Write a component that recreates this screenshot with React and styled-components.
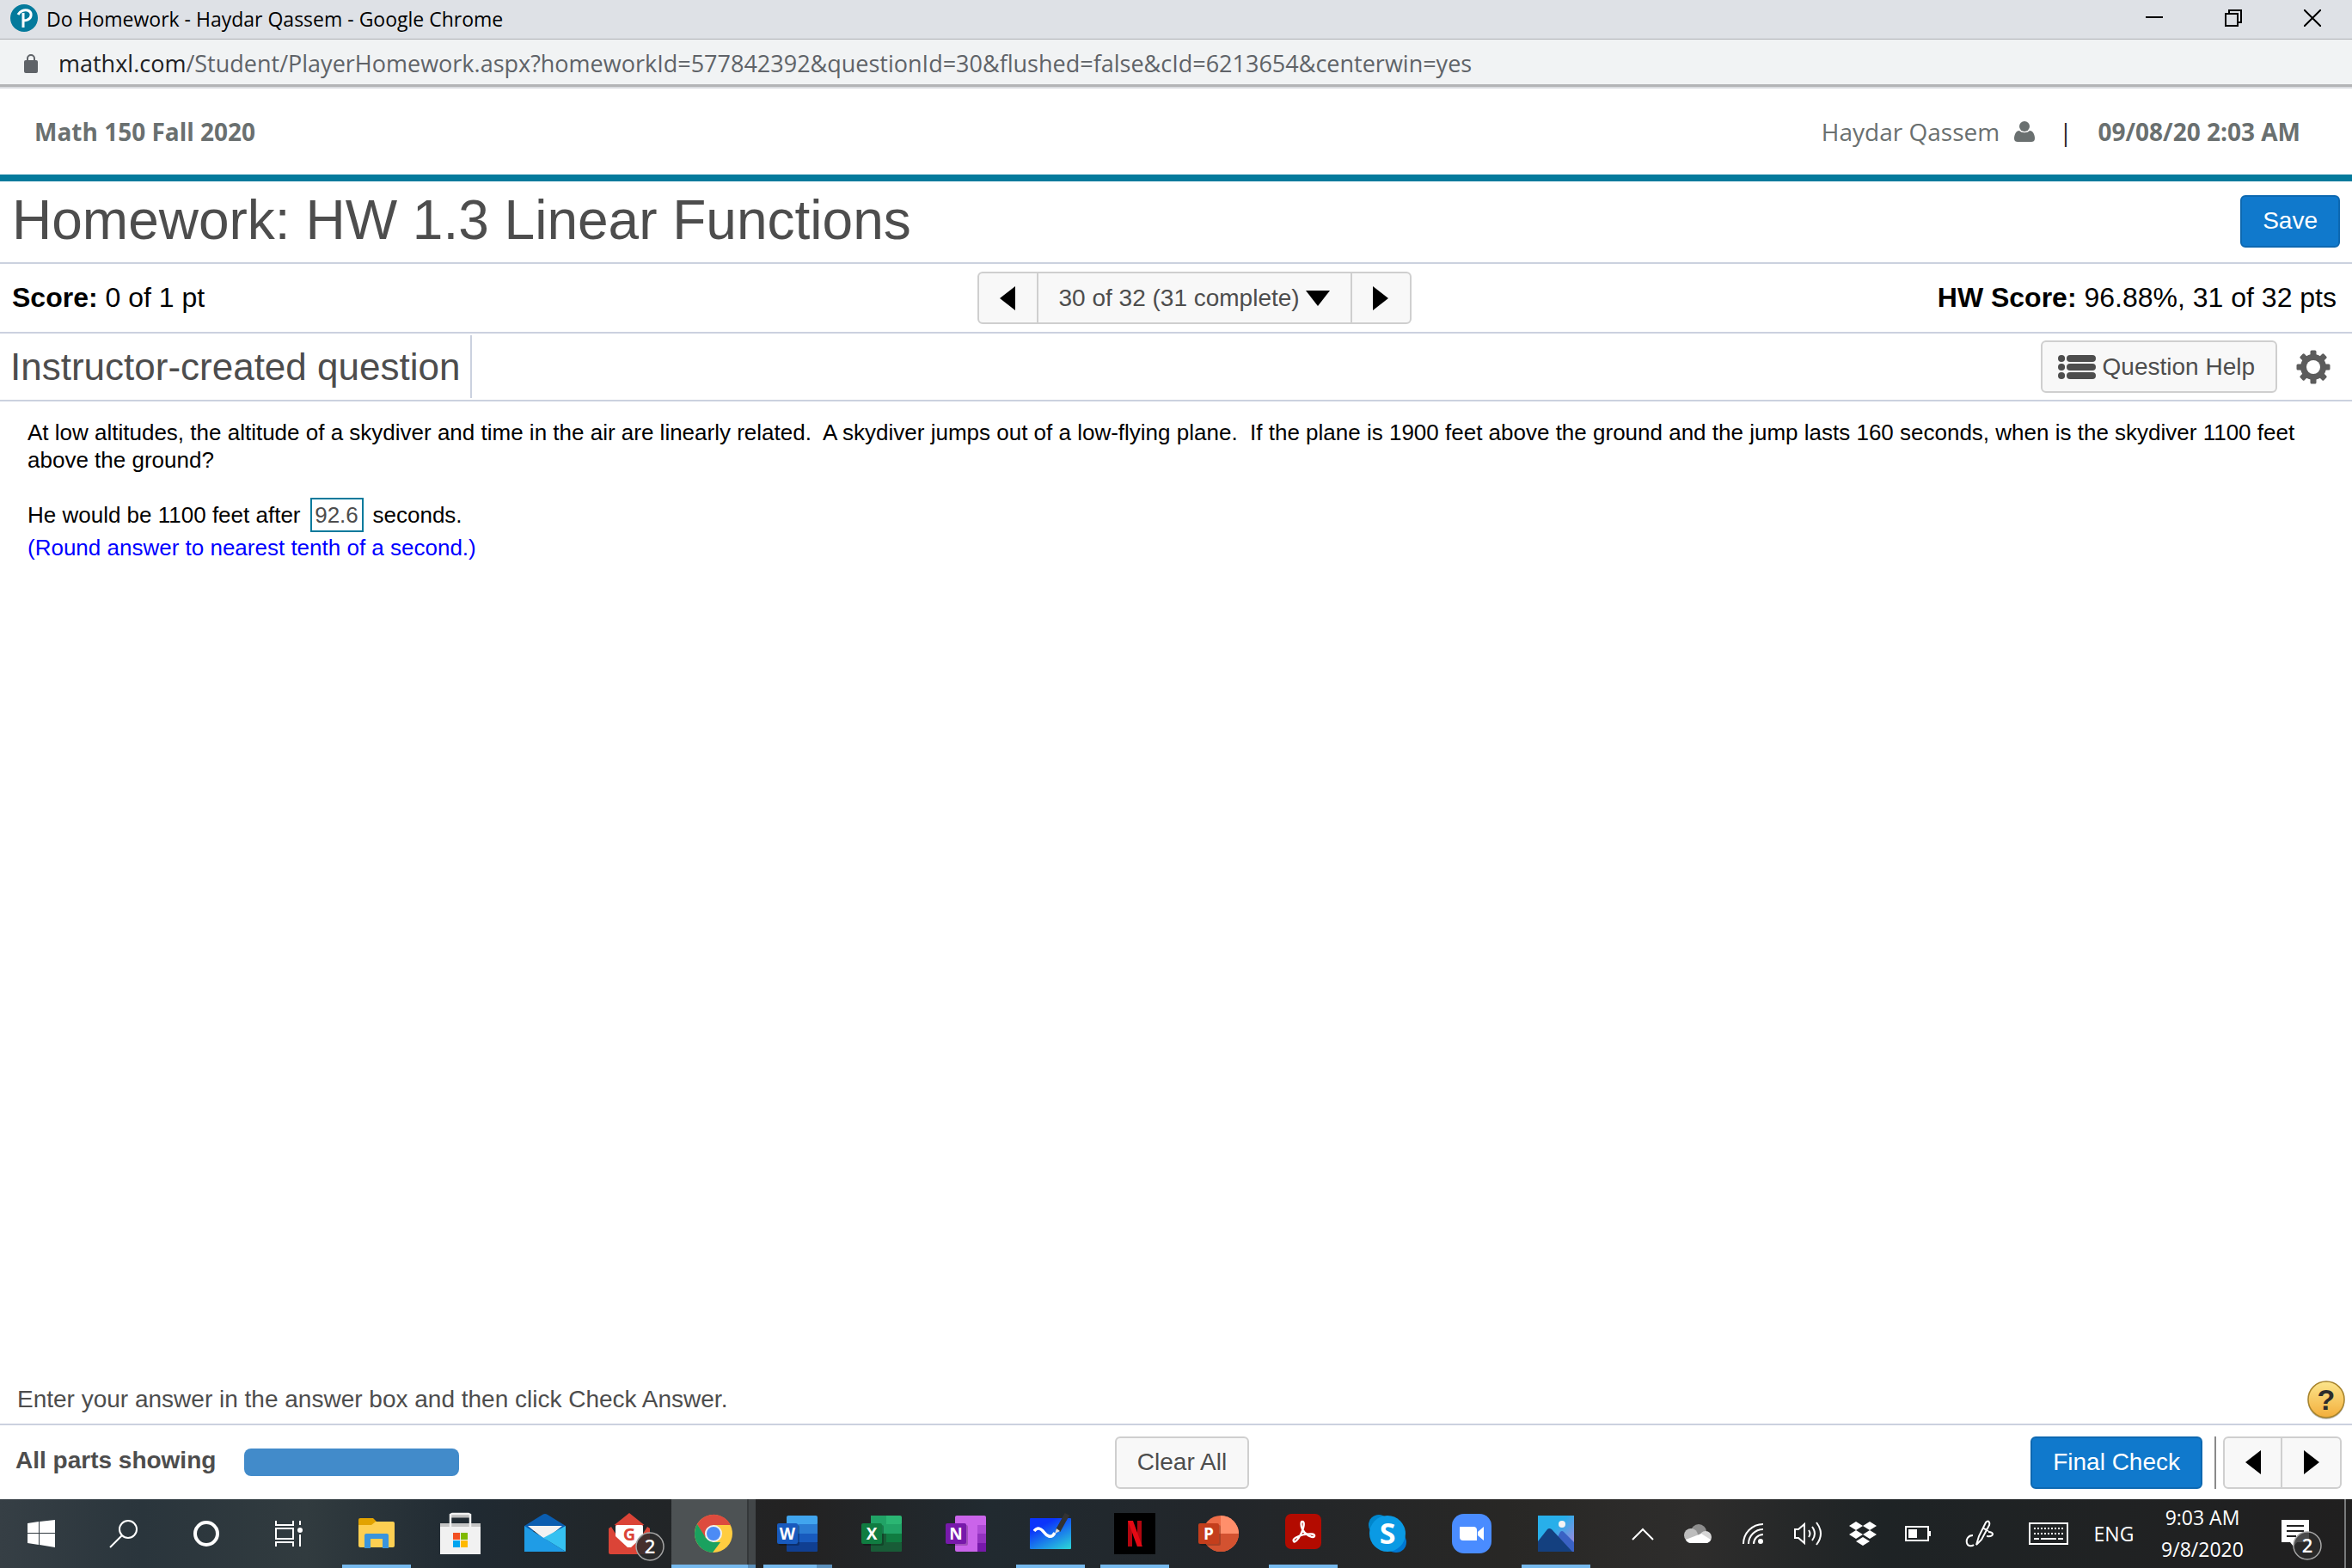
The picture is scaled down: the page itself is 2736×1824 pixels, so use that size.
import React from 'react'
import styled, { createGlobalStyle, css } from 'styled-components'

const OFFICE = {
  word: { letter: 'W', tile: '#185abd', rows: ['#41a5ee', '#2b7cd3', '#185abd', '#103f91'] },
  excel: { letter: 'X', tile: '#107c41', rows: ['#2bb673', '#21a366', '#107c41', '#185c37'] },
}

function ArrowLeft() {
  return (
    <svg width="18" height="28" viewBox="0 0 18 28" aria-hidden="true">
      <path d="M18 0v28L0 14z" fill="#000" />
    </svg>
  )
}

function ArrowRight() {
  return (
    <svg width="18" height="28" viewBox="0 0 18 28" aria-hidden="true">
      <path d="M0 0v28l18-14z" fill="#000" />
    </svg>
  )
}

function PearsonIcon() {
  return (
    <svg width="32" height="32" viewBox="0 0 32 32" aria-hidden="true">
      <circle cx="16" cy="16" r="16" fill="#047a9c" />
      <path d="M9 12c2-4 7-6 11-5 6 2 5 9 0 11-2 1-4 1-5 0M15 10v17" fill="none" stroke="#fff" strokeWidth="3" />
    </svg>
  )
}

function LockIcon() {
  return (
    <svg width="16" height="22" viewBox="0 0 16 22" aria-hidden="true">
      <rect y="7" width="16" height="15" rx="2" fill="#5f6368" />
      <path d="M4 8V5a4 4 0 0 1 8 0v3" fill="none" stroke="#5f6368" strokeWidth="2" />
    </svg>
  )
}

function PersonIcon() {
  return (
    <svg width="24" height="24" viewBox="0 0 24 24" aria-hidden="true">
      <circle cx="12" cy="6" r="6" fill="#6a7070" />
      <path d="M6 11c3 3 9 3 12 0 4 0 6 5 6 9 0 3-2 4-4 4H4c-2 0-4-1-4-4 0-4 2-9 6-9z" fill="#6a7070" />
    </svg>
  )
}

function ListIcon() {
  return (
    <svg width="44" height="30" viewBox="0 0 44 30" aria-hidden="true">
      {[5, 15, 25].map((y) => (
        <g key={y} stroke="#4d4d4d" strokeWidth="8" strokeLinecap="round">
          <path d={`M4 ${y}h0.1M14 ${y}h26`} />
        </g>
      ))}
    </svg>
  )
}

function GearIcon() {
  return (
    <svg width="40" height="40" viewBox="-20 -20 40 40" aria-hidden="true">
      {[0, 45, 90, 135].map((a) => (
        <rect key={a} x="-3.5" y="-19.5" width="7" height="39" rx="1.5" fill="#5c5c5c" transform={`rotate(${a})`} />
      ))}
      <circle r="15" fill="#5c5c5c" />
      <circle r="8" fill="#fff" />
    </svg>
  )
}

function HelpIcon() {
  return (
    <svg width="44" height="46" viewBox="0 0 44 46" aria-hidden="true">
      <defs>
        <linearGradient id="help" x1="0" y1="0" x2="0" y2="1">
          <stop offset="0" stopColor="#fce58c" />
          <stop offset="1" stopColor="#f3ae3c" />
        </linearGradient>
      </defs>
      <circle cx="22" cy="23.5" r="21.5" fill="#bbb" />
      <circle cx="22" cy="22" r="21" fill="url(#help)" stroke="#a8842c" strokeWidth="1.5" />
      <text x="22" y="34" textAnchor="middle" fontFamily="Liberation Sans, sans-serif" fontWeight="700" fontSize="34" fill="#2c2c2c">?</text>
    </svg>
  )
}

function AppIcon({ children }) {
  return (
    <svg width="48" height="48" viewBox="0 0 48 48" overflow="visible" aria-hidden="true">
      {children}
    </svg>
  )
}

function IconLetter({ x = 12, y = 31, size = 19, color = '#fff', children }) {
  return (
    <text x={x} y={y} textAnchor="middle" fontFamily="Open Sans, sans-serif" fontWeight="700" fontSize={size} fill={color}>
      {children}
    </text>
  )
}

function CountBadge({ x, y }) {
  return (
    <g>
      <circle cx={x} cy={y} r="16" fill="#2b2b2b" fillOpacity="0.85" stroke="#a5a5a5" strokeWidth="1.5" />
      <text x={x} y={y + 8} textAnchor="middle" fontFamily="Open Sans, sans-serif" fontWeight="600" fontSize="22" fill="#fff">2</text>
    </g>
  )
}

function ExplorerIcon() {
  return (
    <AppIcon>
      <path d="M3 8a2 2 0 0 1 2-2h15l4 4v8H3z" fill="#e2a300" />
      <path d="M3 14h15l5-4h20a2 2 0 0 1 2 2v26a2 2 0 0 1-2 2H5a2 2 0 0 1-2-2z" fill="#fdcf52" />
      <path d="M10 41V26a2 2 0 0 1 2-2h24a2 2 0 0 1 2 2v15h-7V30H17v11z" fill="#3a94dc" />
    </AppIcon>
  )
}

function StoreIcon() {
  return (
    <AppIcon>
      <path d="M0 12h47v5H0z" fill="#c4c4c4" />
      <path d="M13 3h21" stroke="#bdbdbd" strokeWidth="5" />
      <path d="M0 16h47v32H0z" fill="#f1f1f1" />
      <path d="M12 16V2l2-1h19l2 1v14" fill="none" stroke="#f1f1f1" strokeWidth="2.5" />
      <path d="M15 23h8v8h-8z" fill="#f25022" />
      <path d="M24 23h8v8h-8z" fill="#7fba00" />
      <path d="M15 32h8v8h-8z" fill="#00a4ef" />
      <path d="M24 32h8v8h-8z" fill="#ffb900" />
    </AppIcon>
  )
}

function MailIcon() {
  return (
    <AppIcon>
      <path d="M0 15L21 2q3-2 6 0l21 13-4 6H4z" fill="#0a5db0" />
      <path d="M4 15h40L24 31z" fill="#f2f2f2" />
      <path d="M48 15v30L22 29z" fill="#35c1f1" />
      <path d="M0 15l48 30H0z" fill="#1f9ce6" />
    </AppIcon>
  )
}

function GmailIcon() {
  return (
    <AppIcon>
      <path d="M24 0l20 16H4z" fill="#db4437" />
      <path d="M0 18l3-2h42l3 2v28a2 2 0 0 1-2 2H2a2 2 0 0 1-2-2z" fill="#db4437" />
      <path d="M3 16l5 8V14h-3zM45 16l-5 8V14h3z" fill="#212629" />
      <path d="M8 16a2 2 0 0 1 2-2h28a2 2 0 0 1 2 2v11L26 40h-4L8 27z" fill="#fff" />
      <IconLetter x={24} y={32} size={20} color="#db4437">G</IconLetter>
      <CountBadge x={48} y={39} />
    </AppIcon>
  )
}

function ChromeIcon() {
  return (
    <AppIcon>
      <circle cx="24" cy="24" r="22" fill="#ffcd40" />
      <path d="M5 13l9 16 10-15h20A22 22 0 0 0 5 13z" fill="#dd4b3e" />
      <path d="M5 13l10 16 9 5h8l-9 12A22 22 0 0 1 5 13z" fill="#1aa15f" />
      <circle cx="24" cy="24" r="10" fill="#f1f1f1" />
      <circle cx="24" cy="24" r="8" fill="#4c8bf5" />
    </AppIcon>
  )
}

function OfficeIcon({ kind }) {
  const { letter, tile, rows } = OFFICE[kind]
  return (
    <AppIcon>
      <rect x="11" y="3" width="36" height="11" rx="2" fill={rows[0]} />
      <rect x="11" y="13" width="36" height="11" fill={rows[1]} />
      <rect x="11" y="24" width="36" height="10" fill={rows[2]} />
      <rect x="11" y="34" width="36" height="11" rx="1" fill={rows[3]} />
      {kind === 'excel' && <path d="M11 3h18v21H11z" fill="#21a366" />}
      {kind === 'excel' && <path d="M11 24h18v10H11z" fill="#185c37" />}
      <rect x="2" y="14" width="24" height="24" rx="2" fill="#000" fillOpacity="0.25" />
      <rect y="12" width="24" height="24" rx="2" fill={tile} />
      <IconLetter>{letter}</IconLetter>
    </AppIcon>
  )
}

function OneNoteIcon() {
  return (
    <AppIcon>
      <rect x="11" y="3" width="36" height="42" rx="2" fill="#ca64ea" />
      <path d="M37 14h10v10H37z" fill="#ae4bd5" />
      <path d="M37 24h10v11H37z" fill="#9332bf" />
      <path d="M37 35h10v10H37z" fill="#7719aa" />
      <rect x="2" y="14" width="24" height="24" rx="2" fill="#000" fillOpacity="0.2" />
      <rect y="12" width="24" height="24" rx="2" fill="#7719aa" />
      <IconLetter>N</IconLetter>
    </AppIcon>
  )
}

function WhiteboardIcon() {
  return (
    <AppIcon>
      <defs>
        <linearGradient id="board" x1="0.2" y1="0" x2="0.9" y2="1">
          <stop offset="0.2" stopColor="#0b34fb" />
          <stop offset="1" stopColor="#2bd0d8" />
        </linearGradient>
      </defs>
      <rect y="6" width="48" height="36" rx="1" fill="url(#board)" />
      <path d="M5 21c4-5 8-3 11 1s9 9 13 1" fill="none" stroke="#fff" strokeWidth="3.5" />
      <path d="M31 19L41 1l4 2-10 18z" fill="#333" stroke="#333" strokeWidth="1.5" />
      <path d="M31 18l4 3-6 3z" fill="#ddd" />
    </AppIcon>
  )
}

function NetflixIcon() {
  return (
    <AppIcon>
      <rect width="48" height="48" fill="#000" />
      <rect x="16" y="9" width="5" height="30" fill="#b1060f" />
      <rect x="27" y="9" width="5" height="30" fill="#b1060f" />
      <rect x="16" y="9" width="6" height="30" fill="#e50914" transform="translate(-3.3 0) skewX(20)" />
    </AppIcon>
  )
}

function PowerPointIcon() {
  return (
    <AppIcon>
      <circle cx="26" cy="24" r="21" fill="#ed6c47" />
      <path d="M26 24V3a21 21 0 0 1 21 21z" fill="#ff8f6b" />
      <path d="M5 24h42a21 21 0 0 1-42 0z" fill="#d35230" />
      <rect x="2" y="14" width="24" height="24" rx="2" fill="#000" fillOpacity="0.2" />
      <rect y="12" width="24" height="24" rx="2" fill="#c43e1c" />
      <IconLetter>P</IconLetter>
    </AppIcon>
  )
}

function AcrobatIcon() {
  return (
    <AppIcon>
      <rect x="3" y="1" width="42" height="41" rx="7" fill="#b30b00" />
      <path
        d="M13 33c-2-3 4-6 12-8 7-1 13-1 12 2-2 3-11-2-14-8-2-4-2-9 0-9 3 0 2 7-2 15-3 6-7 10-8 8z"
        fill="none"
        stroke="#fff"
        strokeWidth="2.3"
      />
    </AppIcon>
  )
}

function SkypeIcon() {
  return (
    <AppIcon>
      <circle cx="14" cy="14" r="12" fill="#0086cc" />
      <circle cx="34" cy="34" r="12" fill="#0078d4" />
      <circle cx="24" cy="24" r="21" fill="#0a9ae4" />
      <IconLetter x={24} y={36} size={34}>S</IconLetter>
    </AppIcon>
  )
}

function ZoomIcon() {
  return (
    <AppIcon>
      <rect x="1" y="1" width="46" height="46" rx="14" fill="#4a8cff" />
      <path d="M10 16h16a4 4 0 0 1 4 4v12H14a4 4 0 0 1-4-4zM31 22l7-6v16l-7-6z" fill="#fff" />
    </AppIcon>
  )
}

function PhotosIcon() {
  return (
    <AppIcon>
      <defs>
        <linearGradient id="sky" x1="0" y1="0" x2="1" y2="1">
          <stop offset="0.4" stopColor="#28afea" />
          <stop offset="0.8" stopColor="#8a8ee0" />
        </linearGradient>
      </defs>
      <rect x="3" y="3" width="42" height="42" fill="url(#sky)" />
      <path d="M20 40l9-18q2-2 4 0l12 12v11H20z" fill="#3a62c4" />
      <path d="M3 33l11-14q2-2 5 0l24 26H3z" fill="#14407f" />
      <circle cx="31" cy="13" r="4" fill="#f4f4f4" />
    </AppIcon>
  )
}

function Line({ w = 32, h = 32, sw = 2, children }) {
  return (
    <svg width={w} height={h} viewBox={`0 0 ${w} ${h}`} fill="none" stroke="#fff" strokeWidth={sw} overflow="visible" aria-hidden="true">
      {children}
    </svg>
  )
}

const apps = [
  { name: 'File Explorer', icon: <ExplorerIcon />, open: true },
  { name: 'Microsoft Store', icon: <StoreIcon /> },
  { name: 'Mail', icon: <MailIcon /> },
  { name: 'Gmail', icon: <GmailIcon /> },
  { name: 'Google Chrome', icon: <ChromeIcon />, open: true, active: true },
  { name: 'Word', icon: <OfficeIcon kind="word" />, open: true, stacked: true },
  { name: 'Excel', icon: <OfficeIcon kind="excel" /> },
  { name: 'OneNote', icon: <OneNoteIcon /> },
  { name: 'Whiteboard', icon: <WhiteboardIcon />, open: true },
  { name: 'Netflix', icon: <NetflixIcon />, open: true },
  { name: 'PowerPoint', icon: <PowerPointIcon /> },
  { name: 'Acrobat Reader', icon: <AcrobatIcon />, open: true },
  { name: 'Skype', icon: <SkypeIcon /> },
  { name: 'Zoom', icon: <ZoomIcon /> },
  { name: 'Photos', icon: <PhotosIcon />, open: true },
]

function ChromeWindow() {
  return (
    <header>
      <TitleBar>
        <PearsonIcon />
        <WindowTitle>Do Homework - Haydar Qassem - Google Chrome</WindowTitle>
        <WindowButton aria-label="Minimize">
          <svg width="20" height="20" viewBox="0 0 20 20"><path d="M0 9h20" stroke="#000" strokeWidth="2" /></svg>
        </WindowButton>
        <WindowButton aria-label="Restore">
          <svg width="20" height="20" viewBox="0 0 20 20" fill="none" stroke="#000" strokeWidth="2">
            <path d="M1 5h14v14H1zM5 5V1h14v14h-4" />
          </svg>
        </WindowButton>
        <WindowButton aria-label="Close">
          <svg width="20" height="20" viewBox="0 0 20 20"><path d="M0 0l20 20M20 0L0 20" stroke="#000" strokeWidth="2" /></svg>
        </WindowButton>
      </TitleBar>
      <AddressBar>
        <LockIcon />
        <Address>
          <Domain>mathxl.com</Domain>/Student/PlayerHomework.aspx?homeworkId=577842392&amp;questionId=30&amp;flushed=false&amp;cId=6213654&amp;centerwin=yes
        </Address>
      </AddressBar>
    </header>
  )
}

function Taskbar() {
  return (
    <TaskbarRow>
      <SystemButton aria-label="Start">
        <svg width="32" height="32" viewBox="0 0 32 32"><path d="M0 4l13-2v13H0zM14 2l18-2v15H14zM0 16h13v13L0 27zM14 16h18v16l-18-3z" fill="#fff" /></svg>
      </SystemButton>
      <SystemButton aria-label="Search">
        <Line><circle cx="21" cy="11" r="10" /><path d="M14 18L0 32" /></Line>
      </SystemButton>
      <SystemButton aria-label="Cortana">
        <Line sw={4}><circle cx="16" cy="16" r="13" /></Line>
      </SystemButton>
      <SystemButton aria-label="Task View">
        <Line>
          <path d="M1 1v5h20V1M1 31v-5h20v5M1 10h20v12H1zM29 1v5M29 17v14" />
          <circle cx="29" cy="12" r="2" fill="#fff" />
        </Line>
      </SystemButton>
      <AppList>
        {apps.map((app) => (
          <AppButton key={app.name} aria-label={app.name} $active={app.active}>
            {app.icon}
            {app.open && <OpenMark $wide={app.active} $split={app.active || app.stacked} />}
          </AppButton>
        ))}
      </AppList>
      <Tray>
        <TrayButton aria-label="Show hidden icons">
          <Line w={26} h={14}><path d="M1 14L13 2l12 12" /></Line>
        </TrayButton>
        <TrayButton aria-label="OneDrive">
          <svg width="32" height="22" viewBox="0 0 32 22">
            <circle cx="17" cy="9" r="9" fill="#8d8d8d" />
            <circle cx="8" cy="13" r="8" fill="#bdbdbd" />
            <circle cx="25" cy="15" r="7" fill="#d6d6d6" />
            <path d="M2 18l18-7 11 7q-1 3-5 4H7q-4-1-5-4z" fill="#fff" />
          </svg>
        </TrayButton>
        <TrayButton aria-label="Network">
          <Line w={24} h={24}>
            <path d="M1 24A23 23 0 0 1 24 1M7 24A17 17 0 0 1 24 7M13 24A11 11 0 0 1 24 13" />
            <circle cx="21" cy="21" r="2" fill="#fff" />
          </Line>
        </TrayButton>
        <TrayButton aria-label="Volume">
          <Line w={32} h={28}>
            <path d="M1 9h4l7-6v22l-7-6H1zM17 10q3 4 0 8M21 6q6 8 0 16M26 1q10 13 0 26" />
          </Line>
        </TrayButton>
        <TrayButton aria-label="Dropbox">
          <svg width="32" height="28" viewBox="0 0 32 28">
            <path d="M8 0l8 5-8 5-8-5zM24 0l8 5-8 5-8-5zM8 10l8 5-8 5-8-5zM24 10l8 5-8 5-8-5zM16 18l8 5-8 5-8-5z" fill="#fff" />
          </svg>
        </TrayButton>
        <TrayButton aria-label="Battery">
          <Line w={30} h={18}>
            <path d="M1 1h26v16H1zM29 6v6" />
            <path d="M4 4h10v10H4z" fill="#fff" stroke="none" />
          </Line>
        </TrayButton>
        <TrayButton aria-label="Windows Ink" $wide>
          <Line>
            <path d="M12 29l3-10 8-16q3-3 4 0 1 2-1 5l-8 15zM19 9l7 4M8 18c-6 0-8 5-7 9s6 4 8 2M26 14c7 0 7 6-2 5" />
          </Line>
        </TrayButton>
        <TrayButton aria-label="Touch keyboard" $wide>
          <Line w={46} h={26}>
            <path d="M1 1h44v24H1z" />
            <path d="M6 7h34M6 13h34" strokeDasharray="2 2" />
            <path d="M6 19h6M14 19h18M34 19h6" />
          </Line>
        </TrayButton>
        <Language>ENG</Language>
        <Clock>
          <span>9:03 AM</span>
          <span>9/8/2020</span>
        </Clock>
        <Notifications aria-label="Notifications">
          <svg width="32" height="32" viewBox="0 0 32 32" overflow="visible">
            <path d="M0 0h32v26H18l-4 5-4-5H0z" fill="#fff" />
            <path d="M6 7h20M6 13h20M6 19h11" stroke="#222" strokeWidth="2" />
            <CountBadge x={30} y={30} />
          </svg>
        </Notifications>
        <ShowDesktop aria-label="Show desktop" />
      </Tray>
    </TaskbarRow>
  )
}

function App() {
  return (
    <Page>
      <GlobalStyle />
      <ChromeWindow />
      <CourseBar>
        <strong>Math 150 Fall 2020</strong>
        <UserInfo>
          <UserName>
            Haydar Qassem
            <PersonIcon />
          </UserName>
          <Pipe>|</Pipe>
          <strong>09/08/20 2:03 AM</strong>
        </UserInfo>
      </CourseBar>
      <TitleRow>
        <PageTitle>Homework: HW 1.3 Linear Functions</PageTitle>
        <PrimaryButton>Save</PrimaryButton>
      </TitleRow>
      <ScoreRow>
        <Score><b>Score:</b> 0 of 1 pt</Score>
        <QuestionNav>
          <ArrowButton aria-label="Previous question"><ArrowLeft /></ArrowButton>
          <QuestionPicker>
            <PickerSelect aria-label="Question" defaultValue="30">
              <option value="30">30 of 32 (31 complete)</option>
            </PickerSelect>
            <svg width="28" height="18" viewBox="0 0 28 18" aria-hidden="true"><path d="M0 0h28L14 18z" /></svg>
          </QuestionPicker>
          <ArrowButton aria-label="Next question"><ArrowRight /></ArrowButton>
        </QuestionNav>
        <Score $right><b>HW Score:</b> 96.88%, 31 of 32 pts</Score>
      </ScoreRow>
      <QuestionHeader>
        <QuestionTitle>Instructor-created question</QuestionTitle>
        <HelpButton>
          <ListIcon />
          Question Help
        </HelpButton>
        <IconButton aria-label="Settings"><GearIcon /></IconButton>
      </QuestionHeader>
      <Question>
        <p>
          At low altitudes, the altitude of a skydiver and time in the air are linearly related.&nbsp; A skydiver jumps out of a
          low-flying plane.&nbsp; If the plane is 1900 feet above the ground and the jump lasts 160 seconds, when is the skydiver 1100
          feet above the ground?
        </p>
        <AnswerRow>
          <label htmlFor="answer">He would be 1100 feet after</label>
          <AnswerInput id="answer" type="text" defaultValue="92.6" />
          seconds.
        </AnswerRow>
        <Rounding>(Round answer to nearest tenth of a second.)</Rounding>
      </Question>
      <HintRow>
        <HintText>Enter your answer in the answer box and then click Check Answer.</HintText>
        <IconButton aria-label="Help"><HelpIcon /></IconButton>
      </HintRow>
      <Footer>
        <Parts>
          <PartsLabel>All parts showing</PartsLabel>
          <Progress role="progressbar" aria-label="Parts showing" aria-valuenow={100} />
        </Parts>
        <ClearButton>Clear All</ClearButton>
        <FooterActions>
          <PrimaryButton>Final Check</PrimaryButton>
          <PartNav>
            <ArrowButton aria-label="Previous part"><ArrowLeft /></ArrowButton>
            <ArrowButton aria-label="Next part"><ArrowRight /></ArrowButton>
          </PartNav>
        </FooterActions>
      </Footer>
      <Taskbar />
    </Page>
  )
}

export default App

const GlobalStyle = createGlobalStyle`
  * {
    box-sizing: border-box;
  }
  body {
    margin: 0;
    background: #fff;
  }
  h1, h2, p {
    margin: 0;
    font-weight: 400;
  }
  button, input, select {
    font: inherit;
    color: inherit;
    margin: 0;
    padding: 0;
    border: none;
    background: none;
  }
  svg {
    display: block;
    flex-shrink: 0;
  }
`
const Page = styled.div`
  min-height: 100vh;
  display: flex;
  flex-direction: column;
  font-family: 'Liberation Sans', Arial, sans-serif;
  font-size: 28px;
  color: #4d4d4d;
`
const TitleBar = styled.div`
  display: flex;
  align-items: center;
  height: 46px;
  padding: 0 0 3px 12px;
  background: #dee1e6;
  border-bottom: 1px solid #adafb3;
`
const WindowTitle = styled.span`
  flex: 1;
  margin-left: 10px;
  padding-top: 2px;
  font-family: 'Open Sans', sans-serif;
  font-size: 23px;
  color: #000;
`
const WindowButton = styled.button`
  width: 92px;
  height: 40px;
  display: flex;
  align-items: center;
  justify-content: center;
`
const AddressBar = styled.div`
  display: flex;
  align-items: center;
  gap: 24px;
  height: 57px;
  padding: 0 28px;
  background: #f1f3f4;
  border-bottom: 2px solid #dadce0;
  box-shadow: inset 0 -3px 0 #b3b4b6;
`
const Address = styled.span`
  font-family: 'Open Sans', sans-serif;
  font-size: 27px;
  color: #5f6368;
`
const Domain = styled.span`
  color: #202124;
`
const CourseBar = styled.div`
  display: flex;
  align-items: center;
  justify-content: space-between;
  height: 108px;
  padding: 0 60px 0 40px;
  border-bottom: 8px solid #047a9c;
  font-family: 'Open Sans', sans-serif;
  color: #6a7070;
`
const UserInfo = styled.div`
  display: flex;
  align-items: center;
`
const UserName = styled.span`
  display: flex;
  align-items: center;
  gap: 17px;
`
const Pipe = styled.span`
  margin: 0 30px 0 28px;
  color: #222;
`
const TitleRow = styled.div`
  display: flex;
  align-items: center;
  justify-content: space-between;
  height: 96px;
  padding: 0 14px 2px;
  border-bottom: 2px solid #cbd1df;
`
const PageTitle = styled.h1`
  padding-bottom: 2px;
  font-size: 64px;
  line-height: 72px;
`
const buttonBox = css`
  height: 61px;
  border: 2px solid #cfcfcf;
  border-radius: 6px;
  background: #f8f8f8;
`
const PrimaryButton = styled.button`
  ${buttonBox}
  padding: 0 24px;
  border-color: #0d68b1;
  background: #1079cc;
  color: #fff;
`
const ScoreRow = styled.div`
  display: grid;
  grid-template-columns: 1fr auto 1fr;
  align-items: center;
  height: 81px;
  padding: 0 18px 0 14px;
  border-bottom: 2px solid #cbd1df;
`
const Score = styled.span`
  font-size: 32px;
  color: #000;
  text-align: ${(props) => (props.$right ? 'right' : 'left')};
`
const QuestionNav = styled.div`
  ${buttonBox}
  display: flex;
  margin-left: 46px;
`
const ArrowButton = styled.button`
  width: 67px;
  display: flex;
  align-items: center;
  justify-content: center;
  & + & {
    border-left: 2px solid #cfcfcf;
  }
`
const QuestionPicker = styled.div`
  display: flex;
  align-items: center;
  gap: 6px;
  padding: 0 24px;
  border: solid #cfcfcf;
  border-width: 0 2px;
  svg {
    pointer-events: none;
  }
`
const PickerSelect = styled.select`
  appearance: none;
`
const QuestionHeader = styled.div`
  display: flex;
  align-items: center;
  height: 79px;
  padding: 2px 25px 2px 12px;
  border-bottom: 2px solid #cbd1df;
`
const QuestionTitle = styled.h2`
  align-self: stretch;
  display: flex;
  align-items: center;
  margin-right: auto;
  padding-right: 12px;
  border-right: 2px solid #cbd1df;
  font-size: 44px;
`
const HelpButton = styled.button`
  ${buttonBox}
  display: flex;
  align-items: center;
  gap: 8px;
  margin-right: 22px;
  padding: 0 24px 0 18px;
`
const IconButton = styled.button`
  display: block;
`
const Question = styled.main`
  flex: 1;
  padding: 20px 32px;
  font-size: 26px;
  line-height: 32px;
  color: #000;
`
const AnswerRow = styled.div`
  display: flex;
  align-items: center;
  gap: 11px;
  margin-top: 28px;
`
const AnswerInput = styled.input`
  width: 62px;
  height: 40px;
  border: 2px solid #047a9c;
  color: #4d4d4d;
  text-align: center;
`
const Rounding = styled.p`
  margin-top: 2px;
  color: #0000ff;
`
const HintRow = styled.div`
  display: flex;
  align-items: center;
  justify-content: space-between;
  height: 54px;
  padding: 0 8px 2px 20px;
  border-bottom: 2px solid #cbd1df;
`
const HintText = styled.span`
  padding-bottom: 2px;
`
const Footer = styled.footer`
  display: grid;
  grid-template-columns: 1fr auto 1fr;
  align-items: center;
  height: 86px;
  padding: 0 12px 0 18px;
`
const Parts = styled.div`
  display: flex;
  align-items: center;
  gap: 33px;
`
const PartsLabel = styled.b`
  padding-bottom: 4px;
`
const Progress = styled.div`
  width: 250px;
  height: 32px;
  border-radius: 8px;
  background: #428bca;
`
const ClearButton = styled.button`
  ${buttonBox}
  margin-left: 8px;
  padding: 0 24px;
`
const FooterActions = styled.div`
  display: flex;
  justify-content: flex-end;
`
const PartNav = styled.div`
  display: flex;
  margin-left: 14px;
  padding-left: 8px;
  border-left: 2px solid #8a8a8a;
  ${ArrowButton} {
    ${buttonBox}
    width: 69px;
    border-radius: 6px 0 0 6px;
  }
  ${ArrowButton} + ${ArrowButton} {
    border-left: none;
    border-radius: 0 6px 6px 0;
  }
`
const TaskbarRow = styled.nav`
  display: flex;
  height: 80px;
  background: linear-gradient(90deg, #363f45, #2a353c 6%, #313b3f 13%, #202a32 20%, #212629 26%, #232222 34%, #212a30 42%, #22262a 52%, #282725 64%, #2e2d2c 72%, #1e2325 80%, #202223 90%, #201f1f);
  font-family: 'Open Sans', sans-serif;
  font-size: 23px;
  color: #fff;
`
const SystemButton = styled.button`
  width: 96px;
  display: flex;
  align-items: center;
  justify-content: center;
`
const AppList = styled.div`
  display: flex;
  padding-left: 5px;
`
const AppButton = styled.button`
  position: relative;
  width: 98px;
  display: flex;
  align-items: center;
  justify-content: center;
  ${(props) => props.$active && 'background: linear-gradient(90deg, #4d5254 90%, #34383a 90%, #34383a 92%, #424648 92%);'}
`
const OpenMark = styled.span`
  position: absolute;
  bottom: 0;
  left: ${(props) => (props.$wide ? '0' : '9px')};
  right: ${(props) => (props.$wide ? '0' : '9px')};
  height: 4px;
  background: ${(props) => {
    if (!props.$split) return '#76b9ed'
    const stop = props.$wide ? '91%' : '78%'
    return `linear-gradient(90deg, #76b9ed ${stop}, #5a8fbb ${stop})`
  }};
`
const Tray = styled.div`
  display: flex;
  margin-left: auto;
`
const TrayButton = styled.button`
  width: ${(props) => (props.$wide ? '80px' : '64px')};
  display: flex;
  align-items: center;
  justify-content: center;
`
const Language = styled.button`
  width: 72px;
`
const Clock = styled.button`
  width: 134px;
  display: flex;
  flex-direction: column;
  align-items: center;
  justify-content: center;
  line-height: 37px;
`
const Notifications = styled.button`
  width: 82px;
  display: flex;
  align-items: center;
  justify-content: center;
`
const ShowDesktop = styled.button`
  width: 9px;
  margin-left: 16px;
  border-left: 2px solid #77797a;
`
